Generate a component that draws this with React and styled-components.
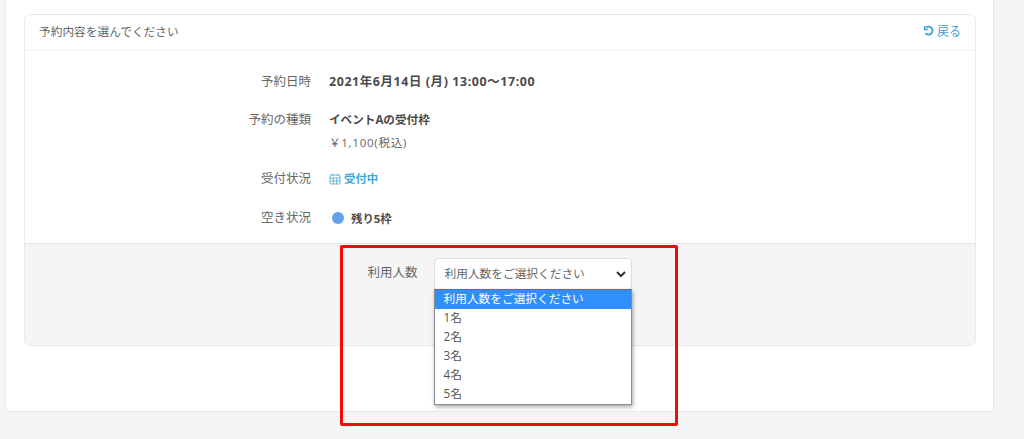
import React from "react";
import styled, { createGlobalStyle } from "styled-components";

const Global = createGlobalStyle`
  html, body { margin: 0; padding: 0; background: #f5f5f5; }
  body { font-family: "Open Sans", "Noto Sans CJK JP", sans-serif; color: #555; overflow: hidden; }
  #root { width: 1024px; height: 439px; position: relative; overflow: hidden; }
`;

const Sheet = styled.div`
  box-sizing: border-box;
  width: 989px;
  height: 412px;
  margin-left: 5px;
  padding: 14px 18px 0;
  background: #fff;
  border: 1px solid #e8e8e8;
  border-top: 0;
  border-radius: 0 0 4px 4px;
`;

const Card = styled.section`
  box-sizing: border-box;
  width: 952px;
  height: 332px;
  border: 1px solid #e9e9e9;
  border-radius: 6px;
  display: flex;
  flex-direction: column;
`;

const CardHeader = styled.header`
  box-sizing: border-box;
  height: 36px;
  flex: none;
  display: flex;
  align-items: center;
  justify-content: space-between;
  padding: 0 14px 4px;
  border-bottom: 1px solid #f0f0f0;
  font-size: 11.7px;
  color: #666;
`;

const BackLink = styled.a`
  display: flex;
  align-items: center;
  gap: 2px;
  font-size: 12px;
  color: #3f9fd6;
`;

const CardBody = styled.div`
  flex: 1;
  display: flex;
  flex-direction: column;
  padding-top: 20px;
`;

const Row = styled.div`
  display: grid;
  grid-template-columns: 286px 1fr;
  column-gap: 18px;
  margin-bottom: ${(p) => p.$gap}px;
`;

const Label = styled.div`
  text-align: right;
  font-size: 12.5px;
  line-height: 22px;
  color: #666;
`;

const Value = styled.div`
  display: flex;
  flex-direction: column;
  font-size: 12px;
  line-height: 22px;
  color: #444;
`;

const Strong = styled.div`
  font-weight: 700;
  font-size: ${(p) => p.$size || 11.6}px;
  letter-spacing: ${(p) => p.$spacing || 0}px;
  color: #4a4a4a;
`;

const Price = styled.div`
  margin-top: 1px;
  font-size: 11.6px;
  letter-spacing: 0.7px;
  color: #666;
`;

const Status = styled.div`
  display: flex;
  align-items: center;
  gap: 3px;
  font-weight: 700;
  font-size: 11.4px;
  color: #3fa9d6;
`;

const Remaining = styled.div`
  display: flex;
  align-items: center;
  gap: 7px;
  padding-left: 3px;
  font-weight: 700;
  font-size: 11.4px;
  color: #4a4a4a;
  position: relative;
  top: 1px;
`;

const Dot = styled.span`
  width: 12px;
  height: 12px;
  border-radius: 50%;
  background: #62a0e8;
  position: relative;
  top: -1px;
`;

const Footer = styled.div`
  flex: 1;
  margin-top: 14px;
  background: #f5f5f5;
  border-top: 1px solid #e6e6e6;
  border-radius: 0 0 5px 5px;
  display: flex;
  justify-content: center;
  align-items: flex-start;
  gap: 16px;
  padding: 14px 1px 0 0;
`;

const FooterLabel = styled.div`
  font-size: 12.5px;
  line-height: 30px;
  color: #666;
`;

const SelectWrap = styled.div`
  position: relative;
  width: 198px;
`;

const SelectBox = styled.div`
  box-sizing: border-box;
  height: 32px;
  display: flex;
  align-items: center;
  justify-content: space-between;
  padding: 0 5px 4px 10px;
  background: #fff;
  border: 1px solid #dcdcdc;
  border-radius: 4px;
  font-size: 11.7px;
  color: #666;
`;

const Chevron = styled.svg`
  margin-top: 3px;
`;

const Listbox = styled.ul`
  position: absolute;
  left: 0;
  top: 31px;
  box-sizing: border-box;
  width: 198px;
  margin: 0;
  padding: 0;
  list-style: none;
  background: #fff;
  border: 1px solid #8c8c8c;
  border-top-color: #6e6e6e;
  box-shadow: 1px 2px 4px rgba(0, 0, 0, 0.35);
  z-index: 2;
`;

const Option = styled.li`
  height: 19px;
  line-height: 17px;
  padding-left: 9px;
  font-size: 11.7px;
  background: ${(p) => (p.$active ? "#2f8ffb" : "transparent")};
  color: ${(p) => (p.$active ? "#fff" : "#555")};
`;

const Highlight = styled.div`
  position: absolute;
  left: 340px;
  top: 245px;
  box-sizing: border-box;
  width: 338px;
  height: 181px;
  border: 3px solid #f50808;
  border-radius: 2px;
  z-index: 3;
  pointer-events: none;
`;

const options = ["1名", "2名", "3名", "4名", "5名"];

export default function App() {
  return (
    <>
      <Global />
      <Sheet>
        <Card>
          <CardHeader>
            <span>予約内容を選んでください</span>
            <BackLink>
              <svg width="12" height="12" viewBox="0 0 12 12" fill="none" stroke="#3f9fd6" strokeWidth="1.8">
                <path d="M3 2.6A4 4 0 1 1 2.4 8.2" />
                <path d="M1.6 1v3.4H5" strokeWidth="1.5" />
              </svg>
              戻る
            </BackLink>
          </CardHeader>
          <CardBody>
            <Row $gap={16}>
              <Label>予約日時</Label>
              <Value>
                <Strong $size={12.4} $spacing={0.62}>2021年6月14日 (月) 13:00～17:00</Strong>
              </Value>
            </Row>
            <Row $gap={14}>
              <Label>予約の種類</Label>
              <Value>
                <Strong>イベントAの受付枠</Strong>
                <Price>￥1,100(税込)</Price>
              </Value>
            </Row>
            <Row $gap={17}>
              <Label>受付状況</Label>
              <Value>
                <Status>
                  <svg width="12" height="12" viewBox="0 0 12 12" fill="none" stroke="#3fa9d6" strokeWidth="0.8">
                    <rect x="1" y="2" width="10" height="9" rx="1" />
                    <path d="M1 5h10M3.5 .6v2.2M8.5 .6v2.2M1 8h10M4.3 5v6M7.7 5v6" />
                  </svg>
                  受付中
                </Status>
              </Value>
            </Row>
            <Row $gap={0}>
              <Label>空き状況</Label>
              <Value>
                <Remaining>
                  <Dot />
                  残り5枠
                </Remaining>
              </Value>
            </Row>
            <Footer>
              <FooterLabel>利用人数</FooterLabel>
              <SelectWrap>
                <SelectBox>
                  利用人数をご選択ください
                  <Chevron width="10" height="8" viewBox="0 0 10 8" fill="none" stroke="#333" strokeWidth="2">
                    <path d="M1 2l4 4 4-4" />
                  </Chevron>
                </SelectBox>
                <Listbox>
                  <Option $active>利用人数をご選択ください</Option>
                  {options.map((o) => (
                    <Option key={o}>{o}</Option>
                  ))}
                </Listbox>
              </SelectWrap>
            </Footer>
          </CardBody>
        </Card>
      </Sheet>
      <Highlight />
    </>
  );
}
